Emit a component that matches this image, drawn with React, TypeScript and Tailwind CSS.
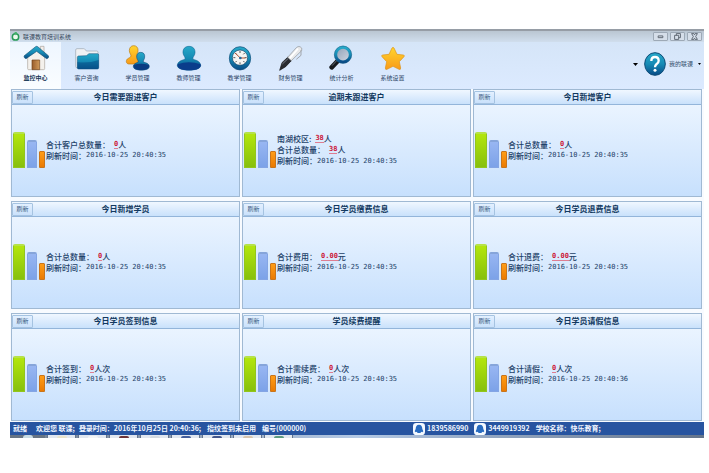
import type { ReactNode } from "react"

type Row = { label: string; value: string; unit: string }
type Card = { title: string; rows: Row[]; time: string }

const cards: Card[] = [
    { title: "今日需要跟进客户", rows: [{ label: "合计客户总数量：", value: "0", unit: "人" }], time: "20:40:35" },
    {
        title: "逾期未跟进客户",
        rows: [
            { label: "南湖校区:", value: "38", unit: "人" },
            { label: "合计总数量：", value: "38", unit: "人" },
        ],
        time: "20:40:35",
    },
    { title: "今日新增客户", rows: [{ label: "合计总数量：", value: "0", unit: "人" }], time: "20:40:35" },
    { title: "今日新增学员", rows: [{ label: "合计总数量：", value: "0", unit: "人" }], time: "20:40:35" },
    { title: "今日学员缴费信息", rows: [{ label: "合计费用：", value: "0.00", unit: "元" }], time: "20:40:35" },
    { title: "今日学员退费信息", rows: [{ label: "合计退费：", value: "0.00", unit: "元" }], time: "20:40:35" },
    { title: "今日学员签到信息", rows: [{ label: "合计签到：", value: "0", unit: "人次" }], time: "20:40:35" },
    { title: "学员续费提醒", rows: [{ label: "合计需续费：", value: "0", unit: "人次" }], time: "20:40:35" },
    { title: "今日学员请假信息", rows: [{ label: "合计请假：", value: "0", unit: "人次" }], time: "20:40:36" },
]

const tools: { label: string; icon: ReactNode }[] = [
    {
        label: "监控中心",
        icon: (
            <>
                <path d="M52 4h11v22H52z" fill="#f3eee9" stroke="#a7a29d" strokeWidth="2" />
                <path d="M14 36 40 14l25 22v35q0 3-3 3H17q-3 0-3-3z" fill="#f4f1ec" stroke="#aaa49c" strokeWidth="2" />
                <path d="M27 45h23v29H27z" fill="url(#wood)" stroke="#70431d" strokeWidth="2" />
                <path d="M3 33 38 5q3-2 6 0l33 28q0 8-6 8L41 19 9 41q-6-1-6-8z" fill="url(#teal)" stroke="#135376" strokeWidth="2" />
            </>
        ),
    },
    {
        label: "客户咨询",
        icon: (
            <>
                <path d="M5 15q0-4 4-4h20q3 0 5 3l3 4h31q4 0 4 4v46H8q-3 0-3-4z" fill="#f0f1f3" stroke="#9ba6b0" strokeWidth="2" />
                <path d="M10 37q0-3 3-4l24-1 8-6h25q4 0 4 4v38q0 4-4 4H14q-4 0-4-4z" fill="url(#teal)" stroke="#12517a" strokeWidth="1.5" />
                <path d="M10 51q32 5 64-6v22q0 4-4 4H14q-4 0-4-4z" fill="#07538a" opacity=".6" />
            </>
        ),
    },
    {
        label: "学员管理",
        icon: (
            <>
                <path d="M26 2c9 0 14 7 13 15 0 9-6 11-4 18l13 7-9 15H12c-9 0-10-10-5-15 5-4 10-4 11-9 1-4-5-8-5-16 0-9 5-15 13-15z" fill="url(#gold)" stroke="#b97a12" strokeWidth="2" />
                <path d="M47 22c9 0 13 6 12 14 0 7-5 10-4 15 10 3 18 5 18 14 0 14-48 14-48 0 0-9 9-11 15-14 0-5-5-8-5-15 0-8 4-14 12-14z" fill="url(#teal)" stroke="#0c416e" strokeWidth="1.5" />
                <path d="M26 60q22-8 46 0c5 20-50 20-46 0z" fill="#0a3c82" />
            </>
        ),
    },
    {
        label: "教师管理",
        icon: (
            <>
                <path d="M39 4c13 0 19 9 18 20-1 9-8 12-6 19 13 3 23 8 23 19 0 18-70 18-70 0 0-11 10-16 23-19 2-7-5-10-6-19C20 13 26 4 39 4z" fill="url(#teal)" stroke="#0d5c8b" strokeWidth="1.5" />
                <path d="M5 58q33-12 69 0c6 24-75 24-69 0z" fill="#0a3d8b" />
            </>
        ),
    },
    {
        label: "教学管理",
        icon: (
            <>
                <ellipse cx="39" cy="40" rx="32" ry="35" fill="url(#teal)" stroke="#0b4774" strokeWidth="2" />
                <circle cx="39" cy="38" r="23" fill="#f5f5f3" stroke="#0a4168" strokeWidth="2" />
                <path d="M39 18v6M39 52v6M19 38h6M53 38h6M25 24l4 4M53 24l-4 4M25 52l4-4M53 52l-4-4" stroke="#555" strokeWidth="3" />
                <path d="M24 24 40 39h15" fill="none" stroke="#b65536" strokeWidth="3" />
                <circle cx="40" cy="39" r="4" fill="#24699c" />
            </>
        ),
    },
    {
        label: "财务管理",
        icon: (
            <>
                <path d="m5 76 7-23 17-16 11 10-17 18z" fill="#292b30" stroke="#111" strokeWidth="2" />
                <path d="M29 37 55 8q5-5 11-3 8 3 5 12L40 47z" fill="#e8e9eb" stroke="#8d9299" strokeWidth="2" />
                <path d="m35 40 25-29" stroke="#fff" strokeWidth="5" />
                <path d="M69 15v16L55 43" fill="none" stroke="#a1a5ab" strokeWidth="3" />
                <path d="m13 57 17-16" stroke="#777d87" strokeWidth="3" />
            </>
        ),
    },
    {
        label: "统计分析",
        icon: (
            <>
                <path d="M25 49 8 67" stroke="#16191d" strokeWidth="14" strokeLinecap="round" />
                <path d="M24 46 10 61" stroke="#656c75" strokeWidth="3" strokeLinecap="round" />
                <circle cx="42" cy="29" r="22" fill="url(#lens)" stroke="url(#teal)" strokeWidth="9" />
                <circle cx="42" cy="29" r="26" fill="none" stroke="#175b81" strokeWidth="1.5" />
            </>
        ),
    },
    {
        label: "系统设置",
        icon: (
            <path
                d="M36 9q3-4 6 0l9 19 19 2q5 1 2 5L58 50l4 19q0 6-5 4L39 64 21 73q-5 2-5-4l4-19L6 35q-3-4 2-5l19-2z"
                fill="url(#gold)"
                stroke="#dc921a"
                strokeWidth="2"
            />
        ),
    },
]

const taskbarItems = [
    "bg-[#e9e3c9]",
    "bg-[#f2f4f6]",
    "bg-[#6d3438]",
    "bg-[#d3d9df]",
    "bg-[#445e9b]",
    "bg-[#44578b]",
    "bg-[#d6c4ad]",
    "bg-[#5d9c80]",
]

function Gradients() {
    return (
        <svg width="0" height="0" className="absolute" aria-hidden="true">
            <defs>
                <linearGradient id="teal" x2="0" y2="1">
                    <stop offset="0" stopColor="#27a9c9" />
                    <stop offset=".5" stopColor="#168bb5" />
                    <stop offset="1" stopColor="#084a86" />
                </linearGradient>
                <linearGradient id="gold" x2="0" y2="1">
                    <stop offset="0" stopColor="#ffd52e" />
                    <stop offset="1" stopColor="#f99a18" />
                </linearGradient>
                <linearGradient id="wood" x2="1" y2="0">
                    <stop offset="0" stopColor="#995d2c" />
                    <stop offset="1" stopColor="#d19b5c" />
                </linearGradient>
                <linearGradient id="lens" x2="1" y2="1">
                    <stop offset="0" stopColor="#8e9fb5" />
                    <stop offset="1" stopColor="#d3d9e4" />
                </linearGradient>
            </defs>
        </svg>
    )
}

function WindowButton({ label, children }: { label: string; children: ReactNode }) {
    return (
        <button aria-label={label} className="flex h-[9px] w-[15px] items-center justify-center rounded-[1px] border border-[#9da9b6] bg-[#d5dee9]">
            <svg viewBox="0 0 12 12" className="size-[7px] fill-none stroke-[#555e69]" strokeWidth="1.5">
                {children}
            </svg>
        </button>
    )
}

function TitleBar() {
    return (
        <header className="flex h-[13px] items-center justify-between border-t-2 border-[#969da6] bg-linear-to-b from-[#bac6d2] to-[#d0deed] pr-[2px] pl-px">
            <div className="flex items-center gap-[3px]">
                <svg viewBox="0 0 24 24" className="size-[9px]">
                    <circle cx="12" cy="13" r="8.5" fill="#edfaee" stroke="#279a57" strokeWidth="4" />
                    <path d="M9 0h7l-3 9z" fill="#48b56e" />
                </svg>
                <h1 className="text-[6px] leading-none text-[#35465a]">联课教育培训系统</h1>
            </div>
            <div className="flex gap-[2px]">
                <WindowButton label="最小化"><path d="M2 5h8v3H2z" /></WindowButton>
                <WindowButton label="还原"><path d="M4 4V1h7v7H8M1 4h7v7H1z" /></WindowButton>
                <WindowButton label="关闭"><path d="M1 1h4l1 2 1-2h4L8 6l3 5H7L6 9l-1 2H1l3-5z" /></WindowButton>
            </div>
        </header>
    )
}

function Toolbar() {
    return (
        <div className="flex h-[47px] justify-between bg-linear-to-b from-[#d5e5f8] to-[#dceaff]">
            <nav className="flex">
                {tools.map((tool, i) => (
                    <button
                        key={tool.label}
                        className={`flex w-[51px] flex-col items-center gap-[3px] pt-[3px] text-[6px] leading-[8px] ${
                            i === 0 ? "bg-linear-to-b from-[#eef6ff] to-[#fafdff] font-bold text-[#173657]" : "text-[#2c4566]"
                        }`}
                    >
                        <svg viewBox="0 0 78 78" className="size-[26px]">{tool.icon}</svg>
                        {tool.label}
                    </button>
                ))}
            </nav>
            <div className="flex items-center pr-[3px] pb-[3px]">
                <button aria-label="展开" className="mr-[6px]">
                    <svg viewBox="0 0 10 6" className="h-[3px] w-[5px]"><path d="M0 0h10L5 6z" /></svg>
                </button>
                <button aria-label="帮助">
                    <svg viewBox="0 0 66 72" className="h-[24px] w-[22px]">
                        <ellipse cx="33" cy="36" rx="31" ry="34" fill="url(#teal)" stroke="#0d4c78" strokeWidth="3" />
                        <path d="M22 27q0-12 11-12t11 11q0 6-6 10-5 4-5 10" fill="none" stroke="#fff" strokeWidth="7" />
                        <circle cx="33" cy="55" r="4.5" fill="#fff" />
                    </svg>
                </button>
                <button className="ml-[3px] flex items-center gap-[5px] text-[6px] leading-none text-[#35506f]">
                    我的联课
                    <svg viewBox="0 0 10 6" className="h-[2px] w-[3px]"><path d="M0 0h10L5 6z" /></svg>
                </button>
            </div>
        </div>
    )
}

function Bars() {
    return (
        <div className="flex items-end gap-[2px]">
            <div className="h-[36px] w-[12px] rounded-t-[2px] border border-t-2 border-[#93c51d] border-t-[#b6e248] bg-linear-to-b from-[#b3e60d] to-[#87c00d]" />
            <div className="h-[28px] w-[10px] rounded-t-[2px] border border-t-2 border-[#84a5e4] border-t-[#86a5da] bg-linear-to-b from-[#98b6f2] to-[#7ca2e8]" />
            <div className="h-[17px] w-[6px] rounded-t-[1px] border border-[#c9751b] bg-linear-to-b from-[#ff9d16] to-[#ea7a02]" />
        </div>
    )
}

function Panel({ card }: { card: Card }) {
    return (
        <section className="flex flex-col border border-[#a0b9d3] bg-linear-to-b from-[#f0f7ff] to-[#c7e0fd]">
            <div className="grid h-[15px] grid-cols-[21px_1fr_21px] items-center border-b border-[#93b5da] bg-linear-to-b from-[#f0f7ff] to-[#c9e1fb]">
                <button className="h-[13px] rounded-[1px] border border-[#a5c3e1] bg-linear-to-b from-[#e3f0ff] to-[#cae1fb] text-[6px] leading-none text-[#35577e]">
                    刷新
                </button>
                <h2 className="text-center text-[8px] leading-none font-bold text-[#12395f]">{card.title}</h2>
            </div>
            <div className="flex min-h-[91px] flex-1 items-center gap-px pb-px pl-px">
                <Bars />
                <div className="text-[8px] leading-none font-medium whitespace-nowrap text-[#1d4168]">
                    {card.rows.map((row) => (
                        <p key={row.label} className="flex h-[11px] items-center">
                            {row.label}
                            <a href="#" className="ml-1 border-b border-[#dd7d92] font-['DejaVu_Sans_Mono',monospace] text-[7px] font-bold text-[#cc1738]">
                                {row.value}
                            </a>
                            {row.unit}
                        </p>
                    ))}
                    <p className="flex h-[11px] items-center">
                        刷新时间：
                        <span className="font-['DejaVu_Sans_Mono',monospace] text-[7px]">2016-10-25 {card.time}</span>
                    </p>
                </div>
            </div>
        </section>
    )
}

function Contact({ number }: { number: string }) {
    return (
        <span className="flex items-center gap-[2px]">
            <svg viewBox="0 0 36 36" className="size-[12px]">
                <rect width="36" height="36" rx="10" fill="#f5faff" />
                <path d="M18 5c7 0 10 6 10 13l3 7-3 3-3-2-3 4h-8l-3-4-3 2-3-3 3-7C8 11 11 5 18 5z" fill="#286bc0" />
            </svg>
            {number}
        </span>
    )
}

function StatusBar() {
    return (
        <footer className="flex h-[13px] items-center bg-[#2754a0] pl-[3px] text-[7px] leading-none font-bold whitespace-nowrap text-[#f1f6ff]">
            <div className="flex w-[400px]">
                <span className="mr-[9px]">就绪</span>
                <span className="mr-[4px]">欢迎您 联课;</span>
                <span className="mr-[6px]">登录时间：2016年10月25日 20:40:36;</span>
                <span className="mr-[6px]">指纹签到未启用</span>
                <span>编号(000000)</span>
            </div>
            <div className="flex items-center gap-[6px]">
                <Contact number="1839586990" />
                <Contact number="3449919392" />
                <span>学校名称：快乐教育;</span>
            </div>
        </footer>
    )
}

function Taskbar() {
    return (
        <div className="flex h-[3px] gap-[2px] overflow-hidden bg-linear-to-r from-[#727f91] via-[#b4c9e5] via-50% to-[#64748b]">
            <div className="flex w-[35px] justify-center bg-[#677484]">
                <div className="h-[3px] w-[10px] rounded-t-full bg-[#c8dce5]" />
            </div>
            {taskbarItems.map((color, i) => (
                <div key={i} className="flex w-[29px] justify-center border-x border-[#64738a] bg-[#e1e7ef]">
                    <div className={`mt-px h-[2px] w-[10px] rounded-t-full ${color}`} />
                </div>
            ))}
        </div>
    )
}

export default function App() {
    return (
        <div className="bg-white pt-[29px] pr-[5px] pb-[35px] pl-[10px] font-['Noto_Sans_CJK_SC',sans-serif]">
            <Gradients />
            <TitleBar />
            <Toolbar />
            <main className="grid grid-cols-3 gap-x-[2px] gap-y-[4px] bg-[#f8fbff] pr-[2px] pb-px pl-px">
                {cards.map((card) => (
                    <Panel key={card.title} card={card} />
                ))}
            </main>
            <StatusBar />
            <Taskbar />
        </div>
    )
}
